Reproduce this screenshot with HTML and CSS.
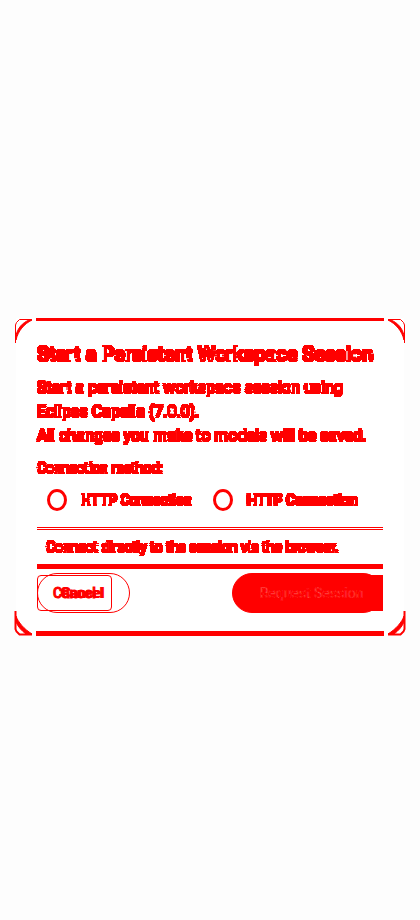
FILE: index.html
```
<!DOCTYPE html>
<html lang="en">
<head>
<meta charset="utf-8">
<meta name="viewport" content="width=device-width, initial-scale=1">
<title>Start a Persistent Workspace Session</title>
<link rel="stylesheet" href="styles.css">
</head>
<body>
<svg width="0" height="0" class="defs" aria-hidden="true">
  <filter id="ghost" x="-5%" y="-20%" width="110%" height="140%" color-interpolation-filters="sRGB">
    <feOffset in="SourceAlpha" dy="-1" result="base"/>
    <feOffset in="SourceAlpha" dy="1" result="shifted"/>
    <feComposite in="base" in2="shifted" operator="xor"/>
    <feComponentTransfer result="thin"><feFuncA type="linear" slope="16" intercept="-3"/></feComponentTransfer>
    <feOffset in="thin" dx="-1" result="before"/>
    <feOffset in="thin" dx="1" result="after"/>
    <feMerge result="edges"><feMergeNode in="thin"/><feMergeNode in="before"/><feMergeNode in="after"/></feMerge>
    <feFlood flood-color="red"/>
    <feComposite in2="edges" operator="in" result="marks"/>
    <feFlood flood-color="#000" flood-opacity="0.08"/>
    <feComposite in2="SourceAlpha" operator="in" result="shade"/>
    <feMerge><feMergeNode in="shade"/><feMergeNode in="marks"/></feMerge>
  </filter>
  <symbol id="corner" viewBox="0 0 22 26">
    <path d="M1.500 25V7L2.500 4.500L5.500 1.500L8 1.500H18" fill="none" stroke="red"/>
    <path d="M18 2C10 6 4 13 2 22V17C4 10 8 5 15 2Z" fill="red" stroke="red"/>
  </symbol>
  <symbol id="corner-low" viewBox="0 0 22 26">
    <path d="M1.500 25V7L2.500 4.500L5.500 1.500L8 1.500H18" fill="none" stroke="red" stroke-width="2"/>
    <path d="M18 2C10 7 4 14 2 20V14C4 9 8 5 12 2Z" fill="red" stroke="red"/>
  </symbol>
</svg>
<main class="card">
  <svg class="corner tl" aria-hidden="true"><use href="#corner"/></svg>
  <svg class="corner tr" aria-hidden="true"><use href="#corner"/></svg>
  <svg class="corner bl" aria-hidden="true"><use href="#corner-low"/></svg>
  <svg class="corner br" aria-hidden="true"><use href="#corner-low"/></svg>
  <h1 class="ghost">Start a Persistent Workspace Session</h1>
  <p class="intro ghost">Start a persistent workspace session using Eclipse Capella (7.0.0).<br>All changes you make to models will be saved.</p>
  <form>
    <fieldset>
      <legend class="ghost">Connection method:</legend>
      <div class="options">
        <label><input type="radio" name="method"><span class="ghost">HTTP Connection</span></label>
        <label><input type="radio" name="method"><span class="ghost">HTTP Connection</span></label>
      </div>
    </fieldset>
    <p class="hint"><span class="ghost">Connect directly to the session via the browser.</span></p>
    <div class="actions">
      <button type="button" class="cancel">Cancel</button>
      <button type="button" class="primary">Request Session</button>
    </div>
  </form>
</main>
</body>
</html>
```
FILE: styles.css
```
* { box-sizing: border-box; }
body {
  margin: 0;
  min-height: 100vh;
  padding: 0 16px;
  display: grid;
  align-items: center;
  background: #fdfdfd;
  color: red;
  font-family: Roboto, "Liberation Sans", sans-serif;
  font-size: 16px;
}
.defs { position: absolute; }
.ghost { filter: url(#ghost); }
.card {
  position: relative;
  margin-top: 34px;
  padding: 24px 21px 23px;
  background: #fff;
}
.card::before, .card::after {
  content: "";
  position: absolute;
  left: 20px;
  right: 20px;
  height: 3px;
  top: 0;
  background: red;
}
.card::after { top: auto; bottom: 0; height: 5px; }
.corner { position: absolute; width: 22px; height: 26px; }
.tl { left: -2px; top: 0; }
.tr { right: -2px; top: 0; transform: scaleX(-1); }
.bl { left: -2px; bottom: 0; transform: scaleY(-1); }
.br { right: -2px; bottom: 0; transform: scale(-1); }
h1 { margin: 0 0 10px; font-size: 20px; line-height: 24px; font-weight: 500; white-space: nowrap; }
.intro { margin: 0 0 10px; line-height: 24px; }
form, fieldset { margin: 0; padding: 0; border: 0; }
legend { padding: 0; font-size: 14px; line-height: 20px; }
.options { display: flex; gap: 21px; padding-left: 10px; }
label { display: flex; align-items: center; gap: 14px; height: 44px; font-size: 14px; font-weight: 500; }
input {
  appearance: none;
  margin: 0;
  width: 20px;
  height: 22px;
  border: 3px solid red;
  border-radius: 50%;
}
.hint {
  margin: 5px 0 4px;
  padding: 5px 9px;
  border-top: 3px double red;
  border-bottom: 5px solid red;
  font-size: 14px;
  line-height: 24px;
}
.hint span { display: block; }
.actions { display: flex; justify-content: space-between; }
button {
  position: relative;
  height: 40px;
  border: 1px solid red;
  border-radius: 20px;
  background: transparent;
  color: red;
  font: 500 14px/20px Roboto, sans-serif;
  -webkit-text-stroke: 1px red;
}
.cancel { width: 93px; padding: 0 24px 0 15px; text-align: left; text-shadow: 7px 0 red, 8px 0 red, 9px 0 red; }
.cancel::before {
  content: "";
  position: absolute;
  inset: 1px 17px 1px -1px;
  border: 1px solid red;
  border-radius: 4px;
}
.primary { width: 151px; padding: 0 0 0 8px; background: red; color: #fff; font-weight: 400; }
.primary::after {
  content: "";
  position: absolute;
  inset: 1px -1px 1px auto;
  width: 20px;
  background: red;
}
```
